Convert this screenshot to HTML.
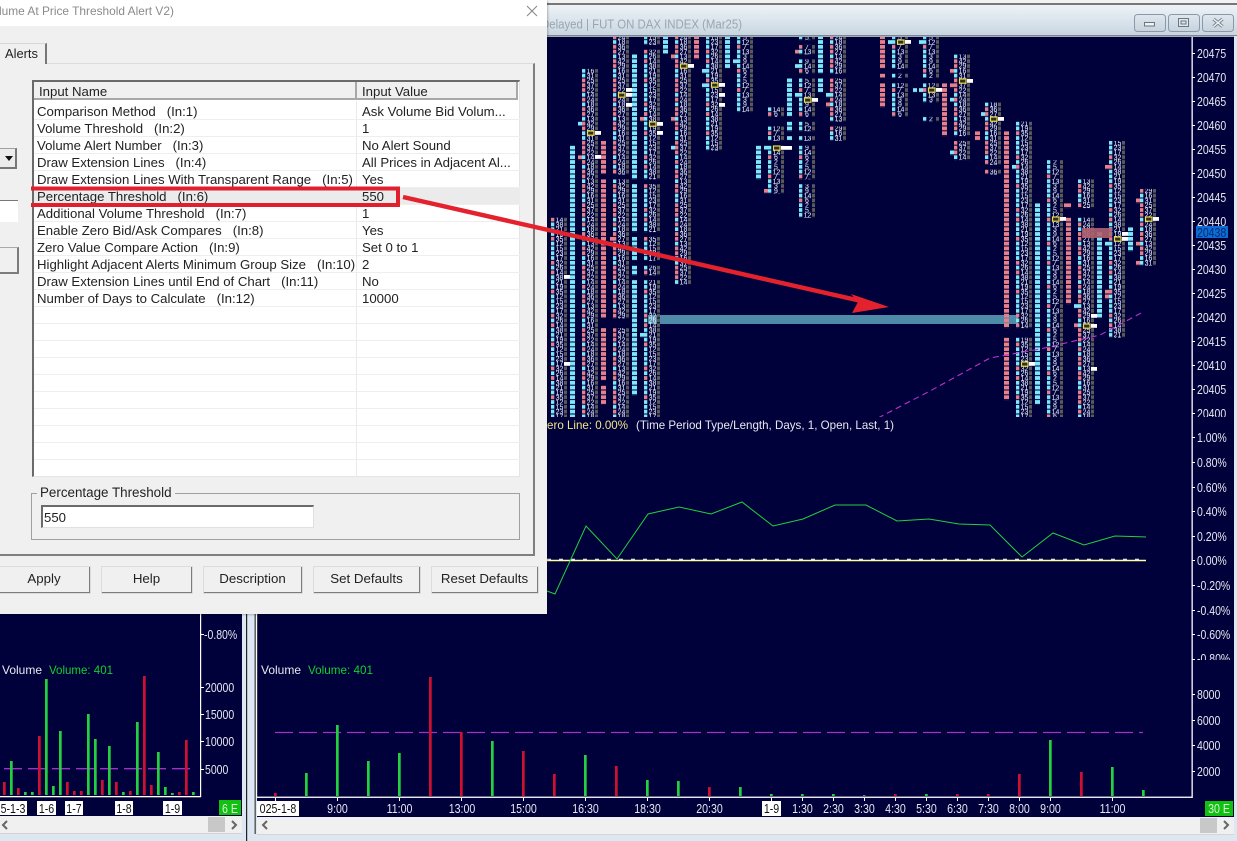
<!DOCTYPE html>
<html><head><meta charset="utf-8">
<style>
html,body{margin:0;padding:0;background:#dce7f2;width:1237px;height:841px;overflow:hidden}
body{position:relative;font-family:"Liberation Sans",sans-serif}
svg{position:absolute;left:0;top:0}
svg text{font-family:"Liberation Sans",sans-serif}
.a{font-size:12.5px;fill:#e6e6f0;transform-box:fill-box;transform-origin:0 50%;transform:scaleX(.84)}
.t{font-size:12.5px;fill:#e6e6f0;text-anchor:middle;transform-box:fill-box;transform-origin:50% 50%;transform:scaleX(.85)}
.l{font-size:12px;fill:#e8e8f0}
.n{font-size:7px;fill:#eef6ff}
.y{fill:#33301a;stroke:#e8dc50;stroke-width:1.2}
.w{fill:#fff}
.wb{fill:url(#wb);stroke:#8a98a8;stroke-width:1}
.vb rect{width:2.7px}
#dlg{position:absolute;left:0;top:0;width:547px;height:614px;background:#f0f0f0;overflow:hidden;font-size:13.2px;color:#222;box-shadow:1px 1px 2px rgba(0,0,0,.25)}
#dlg div{position:absolute;box-sizing:border-box}
#ti{left:0;top:0;width:547px;height:26px;background:#fff;color:#8a8a8a;font-size:11.9px;line-height:22px;white-space:nowrap;text-indent:-1px}
#grid{left:32px;top:80px;width:488px;height:397px;background:#fff;border-top:2px solid #6a6a6a;border-left:2px solid #6a6a6a;border-right:1px solid #e4e4e4;border-bottom:1px solid #e4e4e4}
.h{top:0;height:18px;background:#f0f0f0;border-bottom:2px solid #a8a8a8;border-right:2px solid #a8a8a8;line-height:19px;padding-left:5px}
.r{left:0;width:486px;height:17px;border-bottom:1px solid #eeeeee;line-height:18px;white-space:pre}
.r span{position:absolute;left:3px;top:0}
.r em{position:absolute;left:328px;top:0;font-style:normal}
.b{top:566px;height:28px;background:#f0f0f0;border:1px solid #fafafa;border-right:2px solid #7c7c7c;border-bottom:2px solid #7c7c7c;text-align:center;line-height:24px;font-size:13.3px;outline:1px solid #dcdcdc;outline-offset:-1px}
</style></head><body>
<svg width="1237" height="841" viewBox="0 0 1237 841">
<defs>
<linearGradient id="tb" x1="0" y1="0" x2="0" y2="1"><stop offset="0" stop-color="#eef3f7"/><stop offset="1" stop-color="#c8d6e2"/></linearGradient>
<linearGradient id="wb" x1="0" y1="0" x2="0" y2="1"><stop offset="0" stop-color="#dfe7ee"/><stop offset="1" stop-color="#c6d2dd"/></linearGradient>
<pattern id="B" patternUnits="userSpaceOnUse" width="100" height="1"><rect width="100" height=".79" fill="#7ee8fb"/></pattern>
<pattern id="P" patternUnits="userSpaceOnUse" width="100" height="1"><rect width="100" height=".79" fill="#e8808c"/></pattern>
<pattern id="m1" patternUnits="userSpaceOnUse" x="24" width="31" height="11">
<g fill="#7ee8fb"><rect width="3.3" y="0" height=".79"/><rect width="3.3" y="1" height=".79"/><rect width="3.3" y="2" height=".79"/><rect width="3.3" y="4" height=".79"/><rect width="3.3" y="6" height=".79"/><rect width="3.3" y="7" height=".79"/><rect width="3.3" y="8" height=".79"/><rect width="3.3" y="10" height=".79"/></g>
<g fill="#e8808c"><rect width="3.3" y="3" height=".79"/><rect width="3.3" y="5" height=".79"/><rect width="3.3" y="9" height=".79"/></g>
<rect x="13" width="3" height="11" fill="#5a5a5a"/><g fill="#00003a"><rect x="13" y=".79" width="3" height=".21"/><rect x="13" y="1.79" width="3" height=".21"/><rect x="13" y="2.79" width="3" height=".21"/><rect x="13" y="3.79" width="3" height=".21"/><rect x="13" y="4.79" width="3" height=".21"/><rect x="13" y="5.79" width="3" height=".21"/><rect x="13" y="6.79" width="3" height=".21"/><rect x="13" y="7.79" width="3" height=".21"/><rect x="13" y="8.79" width="3" height=".21"/><rect x="13" y="9.79" width="3" height=".21"/><rect x="13" y="10.79" width="3" height=".21"/></g>
<g transform="scale(1 .2083)" class="n"><text x="4.6" y="4.4">15</text><text x="4.6" y="9.2">23</text><text x="4.6" y="14">17</text><text x="4.6" y="18.8">32</text><text x="4.6" y="23.6">26</text><text x="4.6" y="28.4">14</text><text x="4.6" y="33.2">38</text><text x="4.6" y="38">21</text><text x="4.6" y="42.8">19</text><text x="4.6" y="47.6">35</text><text x="4.6" y="52.4">12</text></g>
</pattern>
<pattern id="m2" patternUnits="userSpaceOnUse" x="24" width="31" height="13">
<g fill="#e8808c"><rect width="3.3" y="0" height=".79"/><rect width="3.3" y="2" height=".79"/><rect width="3.3" y="3" height=".79"/><rect width="3.3" y="5" height=".79"/><rect width="3.3" y="6" height=".79"/><rect width="3.3" y="9" height=".79"/><rect width="3.3" y="10" height=".79"/><rect width="3.3" y="11" height=".79"/></g>
<g fill="#7ee8fb"><rect width="3.3" y="1" height=".79"/><rect width="3.3" y="4" height=".79"/><rect width="3.3" y="7" height=".79"/><rect width="3.3" y="8" height=".79"/><rect width="3.3" y="12" height=".79"/></g>
<g fill="#5a5a5a"><rect x="13" y="0" width="3" height=".79"/><rect x="13" y="1" width="3" height=".79"/><rect x="13" y="2" width="3" height=".79"/><rect x="13" y="3" width="3" height=".79"/><rect x="13" y="4" width="3" height=".79"/><rect x="13" y="5" width="3" height=".79"/><rect x="13" y="6" width="3" height=".79"/><rect x="13" y="7" width="3" height=".79"/><rect x="13" y="8" width="3" height=".79"/><rect x="13" y="9" width="3" height=".79"/><rect x="13" y="10" width="3" height=".79"/><rect x="13" y="11" width="3" height=".79"/><rect x="13" y="12" width="3" height=".79"/></g>
<g transform="scale(1 .2083)" class="n"><text x="4.6" y="4.4">24</text><text x="4.6" y="9.2">18</text><text x="4.6" y="14">36</text><text x="4.6" y="18.8">27</text><text x="4.6" y="23.6">13</text><text x="4.6" y="28.4">42</text><text x="4.6" y="33.2">29</text><text x="4.6" y="38">16</text><text x="4.6" y="42.8">31</text><text x="4.6" y="47.6">25</text><text x="4.6" y="52.4">37</text><text x="4.6" y="57.2">22</text><text x="4.6" y="62">14</text></g>
</pattern>
<pattern id="m3" patternUnits="userSpaceOnUse" x="24" width="31" height="9">
<g fill="#7ee8fb"><rect width="3.3" y="0" height=".79"/><rect width="3.3" y="1" height=".79"/><rect width="3.3" y="3" height=".79"/><rect width="3.3" y="4" height=".79"/><rect width="3.3" y="5" height=".79"/><rect width="3.3" y="6" height=".79"/><rect width="3.3" y="8" height=".79"/></g>
<g fill="#e8808c"><rect width="3.3" y="2" height=".79"/><rect width="3.3" y="7" height=".79"/></g>
<g fill="#5a5a5a"><rect x="13" y="0" width="3" height=".79"/><rect x="13" y="1" width="3" height=".79"/><rect x="13" y="2" width="3" height=".79"/><rect x="13" y="3" width="3" height=".79"/><rect x="13" y="4" width="3" height=".79"/><rect x="13" y="5" width="3" height=".79"/><rect x="13" y="6" width="3" height=".79"/><rect x="13" y="7" width="3" height=".79"/><rect x="13" y="8" width="3" height=".79"/></g>
<g transform="scale(1 .2083)" class="n"><text x="6" y="4.4">5</text><text x="4.6" y="9.2">12</text><text x="6" y="14">7</text><text x="4.6" y="18.8">13</text><text x="6" y="23.6">3</text><text x="6" y="28.4">9</text><text x="4.6" y="33.2">14</text><text x="6" y="38">6</text><text x="6" y="42.8">2</text></g>
</pattern>
<clipPath id="top"><rect x="0" y="37" width="1192" height="380"/></clipPath>
<clipPath id="ax1"><rect x="1193" y="37" width="44" height="380"/></clipPath>
<clipPath id="ax2"><rect x="1193" y="425" width="44" height="235"/></clipPath>
</defs>

<!-- main window frame -->
<rect x="0" y="0" width="1237" height="3" fill="#f2f2f2"/>
<rect x="547" y="3" width="690" height="2" fill="#777"/>
<rect x="547" y="5" width="690" height="30" fill="url(#tb)"/>
<rect x="547" y="35" width="690" height="1.6" fill="#7d8790"/>
<text x="541" y="28.5" font-size="13" fill="#9aa5af" textLength="201" lengthAdjust="spacingAndGlyphs">Delayed | FUT ON DAX INDEX (Mar25)</text>
<rect class="wb" x="1134.5" y="14.5" width="31" height="17" rx="3"/>
<rect class="wb" x="1168.5" y="14.5" width="31" height="17" rx="3"/>
<rect class="wb" x="1202.5" y="14.5" width="31" height="17" rx="3"/>
<rect x="1144.5" y="22.5" width="10" height="3.5" fill="#eef2f5" stroke="#6a7580"/>
<rect x="1178.5" y="18.5" width="10" height="8" fill="#dfe6ec" stroke="#6a7580"/><rect x="1181" y="21" width="5" height="3" fill="none" stroke="#6a7580"/>
<path d="M1213.5 19l9 7.5M1222.5 19l-9 7.5" stroke="#7a8590" stroke-width="3.4" fill="none"/><path d="M1213.5 19l9 7.5M1222.5 19l-9 7.5" stroke="#f0f3f6" stroke-width="1.4" fill="none"/>

<!-- chart backgrounds -->
<rect x="257" y="37" width="977" height="780" fill="#00003a"/>
<rect x="0" y="600" width="242" height="217" fill="#00003a"/>
<rect x="1234" y="36" width="3" height="805" fill="#dce7f2"/>
<rect x="242" y="600" width="13" height="241" fill="#dce7f2"/>
<rect x="246" y="600" width="1.2" height="241" fill="#222"/>
<rect x="254.5" y="600" width="1.4" height="234" fill="#555"/>
<rect x="256" y="36" width="1.2" height="762" fill="#fff"/>

<!-- footprint -->
<g clip-path="url(#top)">
<rect x="648" y="315" width="370" height="9" fill="#4d8ba8"/>
<g transform="translate(0 35.3) scale(1 4.8)">
<g fill="url(#m1)">
<rect x="551" y="38" width="17" height="42"/>
<rect x="644" y="0" width="17" height="2"/><rect x="644" y="3" width="17" height="27"/><rect x="644" y="31" width="17" height="10"/><rect x="644" y="42" width="17" height="5"/><rect x="644" y="48" width="17" height="2"/><rect x="644" y="51" width="17" height="29"/>
<rect x="706" y="0" width="17" height="24"/>
<rect x="1016" y="18" width="17" height="43"/><rect x="1016" y="63" width="17" height="17"/>
<rect x="1109" y="22" width="17" height="41"/>
</g>
<g fill="url(#m2)">
<rect x="582" y="7" width="17" height="73"/>
<rect x="613" y="0" width="17" height="29"/><rect x="613" y="30" width="17" height="29"/><rect x="613" y="61" width="17" height="19"/>
<rect x="675" y="0" width="17" height="52"/>
<rect x="830" y="0" width="17" height="8"/><rect x="830" y="9" width="17" height="9"/><rect x="830" y="19" width="17" height="3"/>
<rect x="954" y="4" width="17" height="17"/><rect x="954" y="22" width="17" height="4"/>
<rect x="985" y="14" width="17" height="13"/><rect x="985" y="28" width="17" height="1"/>
<rect x="1078" y="30" width="17" height="6"/><rect x="1078" y="38" width="17" height="42"/>
<rect x="1140" y="32" width="17" height="16"/>
</g>
<g fill="url(#m3)">
<rect x="737" y="0" width="17" height="16"/>
<rect x="768" y="15" width="17" height="2"/><rect x="768" y="19" width="17" height="3"/><rect x="768" y="23" width="17" height="10"/>
<rect x="799" y="0" width="17" height="1"/><rect x="799" y="2" width="17" height="2"/><rect x="799" y="5" width="17" height="3"/><rect x="799" y="9" width="17" height="8"/><rect x="799" y="18" width="17" height="2"/><rect x="799" y="21" width="17" height="1"/><rect x="799" y="23" width="17" height="7"/><rect x="799" y="31" width="17" height="7"/>
<rect x="892" y="0" width="17" height="7"/><rect x="892" y="8" width="17" height="1"/><rect x="892" y="10" width="17" height="7"/>
<rect x="923" y="0" width="17" height="9"/><rect x="923" y="10" width="17" height="4"/><rect x="923" y="17" width="17" height="1"/>
<rect x="1047" y="26" width="17" height="54"/>
</g>
<g fill="url(#B)">
<rect x="570" y="23" width="5" height="57"/>
<rect x="632" y="4" width="5" height="26"/><rect x="632" y="31" width="5" height="10"/><rect x="632" y="42" width="5" height="5"/><rect x="632" y="48" width="5" height="2"/><rect x="632" y="51" width="5" height="24"/>
<rect x="663" y="0" width="5" height="4"/>
<rect x="725" y="0" width="5" height="7"/>
<rect x="756" y="23" width="5" height="7"/>
<rect x="787" y="9" width="5" height="8"/><rect x="787" y="18" width="5" height="2"/><rect x="787" y="21" width="5" height="1"/>
<rect x="818" y="0" width="5" height="8"/><rect x="818" y="9" width="5" height="3"/>
<rect x="913" y="11" width="4" height="1"/>
<rect x="1035" y="35" width="5" height="42"/>
<rect x="1097" y="41" width="5" height="18"/>
<rect x="1128" y="40" width="5" height="5"/>
<rect x="578" y="18" width="4" height="1"/><rect x="702" y="7" width="4" height="1"/><rect x="702" y="10" width="4" height="1"/><rect x="671" y="23" width="4" height="1"/><rect x="733" y="5" width="4" height="1"/><rect x="764" y="23" width="4" height="1"/><rect x="795" y="6" width="4" height="1"/><rect x="795" y="12" width="4" height="1"/><rect x="826" y="12" width="4" height="1"/><rect x="888" y="1" width="4" height="1"/><rect x="919" y="1" width="4" height="1"/><rect x="919" y="11" width="4" height="1"/><rect x="950" y="13" width="4" height="1"/><rect x="950" y="24" width="4" height="1"/><rect x="981" y="16" width="4" height="1"/><rect x="1012" y="27" width="4" height="1"/><rect x="1074" y="56" width="4" height="1"/><rect x="1105" y="43" width="4" height="1"/><rect x="640" y="62" width="4" height="1"/>
</g>
<g fill="url(#P)">
<rect x="601" y="22" width="5" height="7"/><rect x="601" y="30" width="5" height="29"/><rect x="601" y="61" width="5" height="11"/><rect x="601" y="73" width="5" height="4"/>
<rect x="694" y="0" width="5" height="5"/>
<rect x="880" y="0" width="5" height="7"/><rect x="880" y="8" width="5" height="1"/><rect x="880" y="10" width="5" height="5"/>
<rect x="942" y="10" width="5" height="11"/>
<rect x="975" y="20" width="5" height="2"/>
<rect x="1004" y="20" width="5" height="41"/><rect x="1004" y="63" width="5" height="13"/>
<rect x="1066" y="38" width="5" height="18"/><rect x="1064" y="35" width="7" height="1"/>
<rect x="578" y="25" width="4" height="1"/><rect x="671" y="4" width="4" height="1"/><rect x="671" y="17" width="4" height="1"/><rect x="764" y="32" width="4" height="1"/><rect x="795" y="3" width="4" height="1"/><rect x="826" y="14" width="4" height="1"/><rect x="950" y="7" width="4" height="1"/><rect x="950" y="10" width="4" height="1"/><rect x="1074" y="60" width="4" height="1"/><rect x="1105" y="27" width="4" height="1"/><rect x="1105" y="53" width="4" height="2"/><rect x="1136" y="34" width="4" height="1"/><rect x="1136" y="43" width="4" height="1"/><rect x="1136" y="47" width="4" height="1"/><rect x="610" y="42" width="4" height="1"/><rect x="640" y="17" width="4" height="1"/>
</g>
</g>
<rect x="1082" y="228" width="30" height="10" fill="#b06070" opacity=".9"/>
<g class="w">
<rect x="595" y="131" width="6" height="3.8"/><rect x="595" y="155" width="6" height="3.8"/><rect x="626" y="88" width="6" height="3.8"/><rect x="626" y="93" width="6" height="3.8"/><rect x="626" y="103" width="6" height="3.8"/><rect x="657" y="122" width="6" height="3.8"/><rect x="657" y="131" width="6" height="3.8"/><rect x="688" y="64" width="6" height="3.8"/><rect x="719" y="83" width="6" height="3.8"/><rect x="719" y="93" width="6" height="3.8"/><rect x="719" y="103" width="6" height="3.8"/><rect x="781" y="146" width="11" height="3.8"/><rect x="812" y="98" width="6" height="3.8"/><rect x="905" y="40" width="6" height="3.8"/><rect x="936" y="88" width="6" height="3.8"/><rect x="967" y="79" width="6" height="3.8"/><rect x="998" y="117" width="6" height="3.8"/><rect x="1029" y="362" width="6" height="3.8"/><rect x="1060" y="217" width="6" height="3.8"/><rect x="1091" y="324" width="6" height="3.8"/><rect x="1091" y="314" width="6" height="3.8"/><rect x="1091" y="367" width="6" height="3.8"/><rect x="1122" y="232" width="6" height="3.8"/><rect x="1122" y="237" width="6" height="3.8"/><rect x="1153" y="217" width="6" height="3.8"/><rect x="564" y="275" width="6" height="3.8"/><rect x="564" y="362" width="6" height="3.8"/>
</g>
<g class="y">
<rect x="587.5" y="131" width="6.5" height="4.2"/><rect x="618.5" y="93" width="6.5" height="4.2"/><rect x="649.5" y="122" width="6.5" height="4.2"/><rect x="680.5" y="64" width="6.5" height="4.2"/><rect x="711.5" y="83" width="6.5" height="4.2"/><rect x="773.5" y="146" width="6.5" height="4.2"/><rect x="804.5" y="98" width="6.5" height="4.2"/><rect x="897.5" y="40" width="6.5" height="4.2"/><rect x="928.5" y="88" width="6.5" height="4.2"/><rect x="959.5" y="79" width="6.5" height="4.2"/><rect x="990.5" y="117" width="6.5" height="4.2"/><rect x="1021.5" y="362" width="6.5" height="4.2"/><rect x="1052.5" y="217" width="6.5" height="4.2"/><rect x="1083.5" y="324" width="6.5" height="4.2"/><rect x="1114.5" y="237" width="6.5" height="4.2"/><rect x="1145.5" y="217" width="6.5" height="4.2"/>
</g>
<path d="M878 418L930 391L990 358L1040 349L1100 335L1143 312" fill="none" stroke="#c030d0" stroke-width="1.1" stroke-dasharray="6 4"/>
</g>

<!-- axis -->
<rect x="1191.5" y="37" width="1.3" height="761" fill="#fff"/>
<rect x="200" y="600" width="1.2" height="197" fill="#fff"/>
<g fill="#fff">
<rect x="1192" y="53" width="3" height="1"/><rect x="1192" y="77" width="3" height="1"/><rect x="1192" y="101" width="3" height="1"/><rect x="1192" y="125" width="3" height="1"/><rect x="1192" y="149" width="3" height="1"/><rect x="1192" y="173" width="3" height="1"/><rect x="1192" y="197" width="3" height="1"/><rect x="1192" y="221" width="3" height="1"/><rect x="1192" y="245" width="3" height="1"/><rect x="1192" y="269" width="3" height="1"/><rect x="1192" y="293" width="3" height="1"/><rect x="1192" y="317" width="3" height="1"/><rect x="1192" y="341" width="3" height="1"/><rect x="1192" y="365" width="3" height="1"/><rect x="1192" y="389" width="3" height="1"/><rect x="1192" y="413" width="3" height="1"/>
<rect x="1192" y="437" width="3" height="1"/><rect x="1192" y="462" width="3" height="1"/><rect x="1192" y="487" width="3" height="1"/><rect x="1192" y="511" width="3" height="1"/><rect x="1192" y="536" width="3" height="1"/><rect x="1192" y="560" width="3" height="1"/><rect x="1192" y="585" width="3" height="1"/><rect x="1192" y="610" width="3" height="1"/><rect x="1192" y="634" width="3" height="1"/><rect x="1192" y="659" width="3" height="1"/>
<rect x="1192" y="694" width="3" height="1"/><rect x="1192" y="720" width="3" height="1"/><rect x="1192" y="745" width="3" height="1"/><rect x="1192" y="771" width="3" height="1"/>
<rect x="201" y="634" width="3" height="1"/><rect x="201" y="687" width="3" height="1"/><rect x="201" y="714" width="3" height="1"/><rect x="201" y="741" width="3" height="1"/><rect x="201" y="769" width="3" height="1"/>
</g>
<g clip-path="url(#ax1)">
<text class="a" x="1197" y="58">20475</text><text class="a" x="1197" y="82">20470</text><text class="a" x="1197" y="106">20465</text><text class="a" x="1197" y="130">20460</text><text class="a" x="1197" y="154">20455</text><text class="a" x="1197" y="178">20450</text><text class="a" x="1197" y="202">20445</text><text class="a" x="1197" y="226">20440</text><text class="a" x="1197" y="250">20435</text><text class="a" x="1197" y="274">20430</text><text class="a" x="1197" y="298">20425</text><text class="a" x="1197" y="322">20420</text><text class="a" x="1197" y="346">20415</text><text class="a" x="1197" y="370">20410</text><text class="a" x="1197" y="394">20405</text><text class="a" x="1197" y="418">20400</text>
</g>
<rect x="1196" y="226" width="32" height="12" fill="#0a6ed8"/>
<text class="a" x="1197" y="237" style="fill:#0c2a6a">20438</text>
<g clip-path="url(#ax2)">
<text class="a" x="1197" y="442">1.00%</text><text class="a" x="1197" y="467">0.80%</text><text class="a" x="1197" y="492">0.60%</text><text class="a" x="1197" y="516">0.40%</text><text class="a" x="1197" y="541">0.20%</text><text class="a" x="1197" y="565">0.00%</text><text class="a" x="1197" y="590">-0.20%</text><text class="a" x="1197" y="615">-0.40%</text><text class="a" x="1197" y="639">-0.60%</text><text class="a" x="1197" y="663">-0.80%</text>
</g>
<text class="a" x="1197" y="699">8000</text><text class="a" x="1197" y="725">6000</text><text class="a" x="1197" y="750">4000</text><text class="a" x="1197" y="776">2000</text>
<text class="a" x="204" y="639">-0.80%</text><text class="a" x="205" y="692">20000</text><text class="a" x="205" y="719">15000</text><text class="a" x="205" y="746">10000</text><text class="a" x="205" y="774">5000</text>

<!-- middle pane -->
<text x="540" y="429" font-size="12" fill="#f0e68c" textLength="88" lengthAdjust="spacingAndGlyphs">Zero Line: 0.00%</text>
<text class="l" x="636" y="429" textLength="258" lengthAdjust="spacingAndGlyphs">(Time Period Type/Length, Days, 1, Open, Last, 1)</text>
<path d="M547 560.5H1146" stroke="#ffffa8" stroke-width="1.6"/>
<path d="M547 559.2H1146" stroke="#fff" stroke-width="1" stroke-dasharray="4 8"/>
<polyline fill="none" stroke="#22d040" stroke-width="1" points="547,591 555,594 586,526 617,559 648,514 679,507 711,514 742,502 773,526 803,519 835,505 866,505 897,521 929,519 959,524 990,525 1022,557 1053,533 1084,545 1115,536 1146,537"/>

<!-- volume main -->
<text class="l" x="261" y="674">Volume</text>
<text x="308" y="674" font-size="12" fill="#12d030" textLength="65" lengthAdjust="spacingAndGlyphs">Volume: 401</text>
<path d="M275 732.5H1143" stroke="#a030c8" stroke-width="1.3" stroke-dasharray="18 6"/>
<g fill="#22d040" class="vb">
<rect x="305" y="773" width="2.4" height="23"/><rect x="336" y="725" width="2.4" height="71"/><rect x="367" y="761" width="2.4" height="35"/><rect x="398" y="753" width="2.4" height="43"/><rect x="491" y="741" width="2.4" height="55"/><rect x="584" y="755" width="2.4" height="41"/><rect x="646" y="780" width="2.4" height="16"/><rect x="677" y="781" width="2.4" height="15"/><rect x="739" y="787" width="2.4" height="9"/><rect x="770" y="794" width="2.4" height="2"/><rect x="801" y="794" width="2.4" height="2"/><rect x="832" y="794" width="2.4" height="2"/><rect x="925" y="794" width="2.4" height="2"/><rect x="1049" y="740" width="2.4" height="56"/><rect x="1111" y="767" width="2.4" height="29"/><rect x="1142" y="790" width="2.4" height="6"/>
</g>
<g fill="#d01030" class="vb">
<rect x="274" y="793" width="2.4" height="3"/><rect x="429" y="677" width="2.4" height="119"/><rect x="460" y="732" width="2.4" height="64"/><rect x="522" y="751" width="2.4" height="45"/><rect x="553" y="774" width="2.4" height="22"/><rect x="615" y="766" width="2.4" height="30"/><rect x="708" y="787" width="2.4" height="9"/><rect x="894" y="794" width="2.4" height="2"/><rect x="956" y="794" width="2.4" height="2"/><rect x="987" y="794" width="2.4" height="2"/><rect x="1018" y="774" width="2.4" height="22"/><rect x="1080" y="772" width="2.4" height="24"/>
</g>
<rect x="863" y="795" width="2.4" height="1" fill="#4a8ab0"/>
<rect x="256" y="796.6" width="936" height="1.3" fill="#fff"/>
<g fill="#fff"><rect x="275" y="798" width="1" height="3"/><rect x="337" y="798" width="1" height="3"/><rect x="399" y="798" width="1" height="3"/><rect x="461" y="798" width="1" height="3"/><rect x="523" y="798" width="1" height="3"/><rect x="585" y="798" width="1" height="3"/><rect x="647" y="798" width="1" height="3"/><rect x="709" y="798" width="1" height="3"/><rect x="771" y="798" width="1" height="3"/><rect x="802" y="798" width="1" height="3"/><rect x="833" y="798" width="1" height="3"/><rect x="864" y="798" width="1" height="3"/><rect x="895" y="798" width="1" height="3"/><rect x="926" y="798" width="1" height="3"/><rect x="957" y="798" width="1" height="3"/><rect x="988" y="798" width="1" height="3"/><rect x="1019" y="798" width="1" height="3"/><rect x="1050" y="798" width="1" height="3"/><rect x="1112" y="798" width="1" height="3"/></g>
<rect x="257" y="801" width="42" height="15" fill="#fff"/><text class="t" x="278" y="813" style="fill:#111">025-1-8</text>
<text class="t" x="337.5" y="813">9:00</text><text class="t" x="399.5" y="813">11:00</text><text class="t" x="462" y="813">13:00</text><text class="t" x="523.5" y="813">15:00</text><text class="t" x="585.5" y="813">16:30</text><text class="t" x="647.5" y="813">18:30</text><text class="t" x="709.5" y="813">20:30</text>
<rect x="762" y="801" width="19" height="15" fill="#fff"/><text class="t" x="771.5" y="813" style="fill:#111">1-9</text>
<text class="t" x="802.5" y="813">1:30</text><text class="t" x="833.5" y="813">2:30</text><text class="t" x="864.5" y="813">3:30</text><text class="t" x="895.5" y="813">4:30</text><text class="t" x="926.5" y="813">5:30</text><text class="t" x="957.5" y="813">6:30</text><text class="t" x="988.5" y="813">7:30</text><text class="t" x="1019.5" y="813">8:00</text><text class="t" x="1050.5" y="813">9:00</text><text class="t" x="1112.5" y="813">11:00</text>
<rect x="1205" y="801" width="28" height="15" fill="#12c012"/><text class="t" x="1219" y="813" style="fill:#d8f5d8">30 E</text>

<!-- volume left -->
<text class="l" x="2" y="674">Volume</text>
<text x="49" y="674" font-size="12" fill="#12d030" textLength="64" lengthAdjust="spacingAndGlyphs">Volume: 401</text>
<path d="M4 768.7H190" stroke="#a030c8" stroke-width="1.3" stroke-dasharray="18 6"/>
<g fill="#22d040" class="vb">
<rect x="10" y="761" width="2.4" height="34"/><rect x="24" y="792" width="2.4" height="3"/><rect x="31" y="792" width="2.4" height="3"/><rect x="45" y="679" width="2.4" height="116"/><rect x="52" y="786" width="2.4" height="9"/><rect x="59" y="731" width="2.4" height="64"/><rect x="87" y="714" width="2.4" height="81"/><rect x="94" y="739" width="2.4" height="56"/><rect x="108" y="746" width="2.4" height="49"/><rect x="122" y="792" width="2.4" height="3"/><rect x="136" y="722" width="2.4" height="73"/><rect x="157" y="752" width="2.4" height="43"/><rect x="164" y="787" width="2.4" height="8"/><rect x="171" y="793" width="2.4" height="2"/><rect x="192" y="792" width="2.4" height="3"/>
</g>
<g fill="#d01030" class="vb">
<rect x="3" y="782" width="2.4" height="13"/><rect x="17" y="788" width="2.4" height="7"/><rect x="38" y="736" width="2.4" height="59"/><rect x="66" y="782" width="2.4" height="13"/><rect x="73" y="791" width="2.4" height="4"/><rect x="80" y="791" width="2.4" height="4"/><rect x="101" y="780" width="2.4" height="15"/><rect x="115" y="782" width="2.4" height="13"/><rect x="129" y="791" width="2.4" height="4"/><rect x="143" y="676" width="2.4" height="119"/><rect x="150" y="785" width="2.4" height="10"/><rect x="178" y="792" width="2.4" height="3"/><rect x="185" y="740" width="2.4" height="55"/>
</g>
<rect x="0" y="796" width="201" height="1.3" fill="#fff"/>
<rect x="0" y="801" width="27" height="14" fill="#fff"/><text class="t" x="13" y="813" style="fill:#111">5-1-3</text>
<rect x="37" y="801" width="19" height="14" fill="#fff"/><text class="t" x="46.5" y="813" style="fill:#111">1-6</text>
<rect x="65" y="801" width="18" height="14" fill="#fff"/><text class="t" x="74" y="813" style="fill:#111">1-7</text>
<rect x="115" y="801" width="18" height="14" fill="#fff"/><text class="t" x="124" y="813" style="fill:#111">1-8</text>
<rect x="163" y="801" width="19" height="14" fill="#fff"/><text class="t" x="172.5" y="813" style="fill:#111">1-9</text>
<rect x="219" y="800" width="22" height="15" fill="#12c012"/><text class="t" x="230" y="813" style="fill:#d8f5d8">6 E</text>

<!-- scrollbars -->
<rect x="0" y="816" width="242" height="17" fill="#f0f0f0"/>
<rect x="257" y="817" width="977" height="17" fill="#f0f0f0"/>
<rect x="0" y="833" width="242" height="1" fill="#d4d4d4"/><rect x="257" y="834" width="977" height="1" fill="#d4d4d4"/>
<rect x="208" y="817" width="17" height="15" fill="#c8c8c8"/>
<rect x="1200" y="818" width="17" height="15" fill="#c8c8c8"/>
<path d="M7 821l-4 4 4 4M232 821l4 4-4 4M267 821l-4 4 4 4M1224 821l4 4-4 4" fill="none" stroke="#666" stroke-width="2"/>
</svg>

<div id="dlg">
<div id="ti">lume At Price Threshold Alert V2)</div>
<div style="left:0;top:63px;width:535px;height:493px;border-top:1px solid #dcdcdc;border-right:2px solid #7f7f7f;border-bottom:2px solid #7f7f7f"></div>
<div style="left:0;top:43px;width:47px;height:21px;background:#f0f0f0;border-top:1px solid #d8d8d8;border-right:2px solid #777;line-height:20px;padding-left:5px;font-size:12.9px">Alerts</div>
<div style="left:-2px;top:148px;width:19px;height:21px;border:1px solid #a0a0a0;border-right:2px solid #777;border-bottom:2px solid #777;background:#ececec"></div>
<div style="left:5px;top:156px;width:0;height:0;border-left:4px solid transparent;border-right:4px solid transparent;border-top:5px solid #111"></div>
<div style="left:-2px;top:200px;width:20px;height:22px;background:#fff;border-top:1px solid #777"></div>
<div style="left:-2px;top:247px;width:21px;height:27px;border-top:1px solid #aaa;border-right:2px solid #7c7c7c;border-bottom:2px solid #7c7c7c"></div>

<div id="grid">
<div class="h" style="left:0;width:323px">Input Name</div>
<div class="h" style="left:323px;width:161px;padding-left:5px">Input Value</div>
<div style="left:322px;top:19px;width:1px;height:376px;background:#eaeaea"></div>
<div class="r" style="top:21px"><span>Comparison Method   (In:1)</span><em>Ask Volume Bid Volum...</em></div>
<div class="r" style="top:38px"><span>Volume Threshold   (In:2)</span><em>1</em></div>
<div class="r" style="top:55px"><span>Volume Alert Number   (In:3)</span><em>No Alert Sound</em></div>
<div class="r" style="top:72px"><span>Draw Extension Lines   (In:4)</span><em>All Prices in Adjacent Al...</em></div>
<div class="r" style="top:89px"><span>Draw Extension Lines With Transparent Range   (In:5)</span><em>Yes</em></div>
<div class="r" style="top:106px;background:#ebebeb"><span>Percentage Threshold   (In:6)</span><em>550</em></div>
<div class="r" style="top:123px"><span>Additional Volume Threshold   (In:7)</span><em>1</em></div>
<div class="r" style="top:140px"><span>Enable Zero Bid/Ask Compares   (In:8)</span><em>Yes</em></div>
<div class="r" style="top:157px"><span>Zero Value Compare Action   (In:9)</span><em>Set 0 to 1</em></div>
<div class="r" style="top:174px"><span>Highlight Adjacent Alerts Minimum Group Size   (In:10)</span><em>2</em></div>
<div class="r" style="top:191px"><span>Draw Extension Lines until End of Chart   (In:11)</span><em>No</em></div>
<div class="r" style="top:208px"><span>Number of Days to Calculate   (In:12)</span><em>10000</em></div>
<div class="r" style="top:225px"></div><div class="r" style="top:242px"></div><div class="r" style="top:259px"></div><div class="r" style="top:276px"></div><div class="r" style="top:293px"></div><div class="r" style="top:310px"></div><div class="r" style="top:327px"></div><div class="r" style="top:344px"></div><div class="r" style="top:361px"></div>
</div>

<div style="left:31px;top:493px;width:489px;height:47px;border:1px solid #a0a0a0"></div>
<div style="left:37px;top:485px;background:#f0f0f0;padding:0 3px;line-height:16px;white-space:nowrap;font-size:13.4px">Percentage Threshold</div>
<div style="left:41px;top:505px;width:273px;height:23px;background:#fff;border-top:2px solid #6a6a6a;border-left:2px solid #6a6a6a;border-right:1px solid #e0e0e0;border-bottom:1px solid #e0e0e0;line-height:21px;padding-left:1px">550</div>

<div class="b" style="left:-2px;width:93px">Apply</div>
<div class="b" style="left:101px;width:92px">Help</div>
<div class="b" style="left:203px;width:100px">Description</div>
<div class="b" style="left:313px;width:108px">Set Defaults</div>
<div class="b" style="left:431px;width:108px">Reset Defaults</div>
</div>

<svg width="1237" height="841" viewBox="0 0 1237 841">
<path d="M527 6l10 10M537 6l-10 10" stroke="#8a8a8a" stroke-width="1.1" fill="none"/>
<path d="M31 188.5H400M31 205H400M398 186.5V207" stroke="#e0202c" stroke-width="4" fill="none"/>
<path d="M403 197L870 303" stroke="#e4222e" stroke-width="4.4" fill="none"/>
<polygon points="889,307 851,294 858,302 852,313" fill="#e4222e"/>
</svg>
</body></html>
